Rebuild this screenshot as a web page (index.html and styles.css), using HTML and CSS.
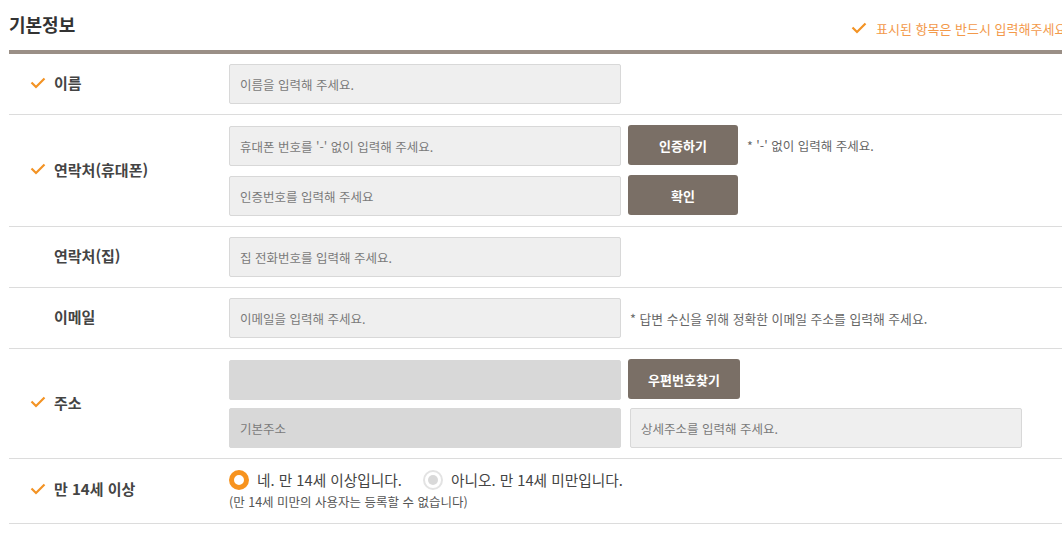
FILE: index.html
```html
<!DOCTYPE html>
<html lang="ko">
<head>
  <meta charset="UTF-8" />
  <meta name="viewport" content="width=device-width, initial-scale=1.0" />
  <title>기본정보</title>
  <link rel="stylesheet" href="styles.css">
</head>
<body>

  <div class="form-wrap">
    <!-- Header -->
    <div class="form-head">
      <h2>기본정보</h2>
      <p class="required-note">
        <svg class="check" viewBox="0 0 16 12"><path d="M1.5 5.5 L6 10 L14.5 1.5" /></svg>
        표시된 항목은 반드시 입력해주세요.
      </p>
    </div>

    <!-- 이름 -->
    <div class="row">
      <div class="label">
        <svg class="check" viewBox="0 0 16 12"><path d="M1.5 5.5 L6 10 L14.5 1.5" /></svg>
        이름
      </div>
      <div class="fields">
        <div class="line">
          <input type="text" placeholder="이름을 입력해 주세요.">
        </div>
      </div>
    </div>

    <!-- 연락처(휴대폰) -->
    <div class="row">
      <div class="label">
        <svg class="check" viewBox="0 0 16 12"><path d="M1.5 5.5 L6 10 L14.5 1.5" /></svg>
        연락처(휴대폰)
      </div>
      <div class="fields gap10">
        <div class="line">
          <input type="text" placeholder="휴대폰 번호를 '-' 없이 입력해 주세요.">
          <button class="btn">인증하기</button>
          <span class="hint">* '-' 없이 입력해 주세요.</span>
        </div>
        <div class="line">
          <input type="text" placeholder="인증번호를 입력해 주세요">
          <button class="btn">확인</button>
        </div>
      </div>
    </div>

    <!-- 연락처(집) -->
    <div class="row">
      <div class="label no-check">연락처(집)</div>
      <div class="fields">
        <div class="line">
          <input type="text" placeholder="집 전화번호를 입력해 주세요.">
        </div>
      </div>
    </div>

    <!-- 이메일 -->
    <div class="row">
      <div class="label no-check">이메일</div>
      <div class="fields">
        <div class="line">
          <input type="email" placeholder="이메일을 입력해 주세요.">
          <span class="hint email-hint">* 답변 수신을 위해 정확한 이메일 주소를 입력해 주세요.</span>
        </div>
      </div>
    </div>

    <!-- 주소 -->
    <div class="row">
      <div class="label">
        <svg class="check" viewBox="0 0 16 12"><path d="M1.5 5.5 L6 10 L14.5 1.5" /></svg>
        주소
      </div>
      <div class="fields gap8">
        <div class="line">
          <input type="text" class="disabled" disabled>
          <button class="btn btn-wide">우편번호찾기</button>
        </div>
        <div class="line gap9">
          <input type="text" class="disabled" placeholder="기본주소" disabled>
          <input type="text" placeholder="상세주소를 입력해 주세요.">
        </div>
      </div>
    </div>

    <!-- 만 14세 이상 -->
    <div class="row age-row">
      <div class="label">
        <svg class="check" viewBox="0 0 16 12"><path d="M1.5 5.5 L6 10 L14.5 1.5" /></svg>
        만 14세 이상
      </div>
      <div class="fields">
        <div class="radios">
          <label class="radio"><span class="dot on"></span>네. 만 14세 이상입니다.</label>
          <label class="radio"><span class="dot"></span>아니오. 만 14세 미만입니다.</label>
        </div>
        <p class="note">(만 14세 미만의 사용자는 등록할 수 없습니다)</p>
      </div>
    </div>
  </div>

</body>
</html>
```

FILE: styles.css
```css
* {
  box-sizing: border-box;
  margin: 0;
  padding: 0;
  font-family: "Noto Sans CJK KR", "Noto Sans", sans-serif;
}

html, body {
  overflow: hidden;
}

body {
  background: #fff;
  color: #444;
  width: 1062px;
}

.form-wrap {
  width: 1090px;
  margin-left: 9px;
}

.form-head {
  display: flex;
  justify-content: space-between;
  align-items: center;
  height: 50px;
  border-bottom: 4px solid #9a8f86;
  box-sizing: content-box;
}

.form-head h2 {
  font-size: 18px;
  font-weight: 700;
  color: #333;
  margin-top: -3px;
}

.required-note {
  display: flex;
  align-items: center;
  gap: 9px;
  font-size: 13px;
  color: #f3994a;
  margin-top: 6px;
  margin-right: 29px;
}

.check {
  width: 16px;
  height: 12px;
  fill: none;
  stroke: #f39324;
  stroke-width: 2.2;
  flex-shrink: 0;
}

.row {
  display: grid;
  grid-template-columns: 220px 1fr;
  border-bottom: 1px solid #dcdcdc;
  padding: 10px 0;
}

.label {
  display: flex;
  align-items: center;
  gap: 8px;
  padding-left: 21px;
  padding-bottom: 3px;
  font-size: 15px;
  font-weight: 700;
  color: #444;
}

.label.no-check {
  padding-left: 45px;
}

.fields {
  display: flex;
  flex-direction: column;
}

.gap10 {
  gap: 10px;
  padding-top: 1px;
}

.gap8 {
  gap: 8px;
  padding-top: 1px;
}

.line {
  display: flex;
  align-items: center;
  gap: 7px;
}

.line.gap9 {
  gap: 9px;
}

input[type="text"],
input[type="email"] {
  width: 392px;
  height: 40px;
  padding: 0 10px;
  border: 1px solid #d8d8d8;
  border-radius: 2px;
  background: #efefef;
  font-size: 12.5px;
  color: #333;
  outline: none;
}

input::placeholder {
  color: #7a7a7a;
}

input.disabled {
  background: #d8d8d8;
  border-color: #d8d8d8;
}

.btn {
  width: 110px;
  height: 40px;
  border: none;
  border-radius: 3px;
  background: #7a6f66;
  color: #fff;
  font-size: 13px;
  font-weight: 700;
  cursor: pointer;
  margin-top: -2px;
}

.btn-wide {
  width: 112px;
}

.hint {
  font-size: 12.5px;
  color: #666;
  margin-left: 2px;
  margin-top: -2px;
}

.email-hint {
  font-size: 12.8px;
  margin-left: 2px;
  margin-top: 0;
}

.age-row {
  padding: 10px 0 12px;
}

.radios {
  display: flex;
  align-items: center;
  gap: 21px;
}

.radio {
  display: flex;
  align-items: center;
  gap: 8px;
  font-size: 14.7px;
  color: #444;
}

.dot {
  width: 20px;
  height: 20px;
  border-radius: 50%;
  border: 2px solid #e3e3e3;
  background: #fff;
  position: relative;
}

.dot::after {
  content: "";
  position: absolute;
  left: 3px;
  top: 3px;
  width: 10px;
  height: 10px;
  border-radius: 50%;
  background: #d9d9d9;
}

.dot.on {
  border: 5px solid #f7931e;
}

.dot.on::after {
  display: none;
}

.note {
  font-size: 12.5px;
  color: #555;
  margin-top: 2px;
}
```
